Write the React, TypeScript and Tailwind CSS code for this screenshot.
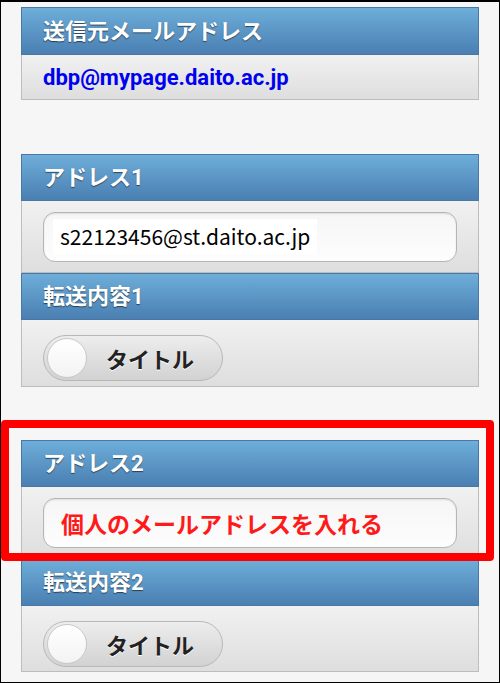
import React from "react";

const jp = { fontFamily: '"Noto Sans CJK JP", "Noto Sans", sans-serif' };
const rb = { fontFamily: 'Roboto, "Noto Sans CJK JP", sans-serif' };

function Header({ children, h = 47 }: { children: React.ReactNode; h?: number }) {
  return (
    <div
      className="flex items-center border border-[#4a78a6] bg-gradient-to-b from-[#6eaed9] to-[#4a7fb2] pl-[21px] text-[22px] font-bold text-white [text-shadow:0_1px_1px_rgba(0,0,0,0.55)]"
      style={{ ...rb, height: h }}
    >
      {children}
    </div>
  );
}

function Row({ children, className = "" }: { children: React.ReactNode; className?: string }) {
  return (
    <div className={"border-x border-b border-[#bdbdbd] bg-gradient-to-b from-[#f1f1f1] to-[#dedede] " + className}>
      {children}
    </div>
  );
}

function InputBox({ children }: { children: React.ReactNode }) {
  return (
    <div className="flex h-[50px] items-center rounded-[12px] border border-[#b5b5b5] bg-gradient-to-b from-[#f6f6f6] to-[#fdfdfd] pl-[9px] shadow-[inset_0_1px_2px_rgba(0,0,0,0.1)]">
      {children}
    </div>
  );
}

function Toggle() {
  return (
    <div className="flex h-[46px] w-[180px] items-center rounded-full border border-[#b8b8b8] bg-gradient-to-b from-[#ededed] to-[#d2d2d2] pl-[3px]">
      <div className="h-[40px] w-[40px] rounded-full border border-[#c8c8c8] bg-gradient-to-b from-white to-[#f3f3f3]" />
      <span
        className="ml-[19px] text-[22px] font-bold text-[#222] [text-shadow:0_1px_0_#fff]"
        style={jp}
      >
        タイトル
      </span>
    </div>
  );
}

export default function App() {
  return (
    <div className="relative h-[683px] w-[500px] overflow-hidden border-b border-l border-r border-t-2 border-black bg-[#f6f6f6]">
      <div className="flex flex-col px-[20px] pt-[5px]">
        {/* Panel 1 */}
        <div>
          <Header h={48}>送信元メールアドレス</Header>
          <Row className="flex h-[45px] items-center pl-[21px]">
            <span className="text-[22px] font-bold text-[#0000f0]" style={rb}>
              dbp@mypage.daito.ac.jp
            </span>
          </Row>
        </div>

        {/* Panel 2 */}
        <div className="mt-[54px]">
          <Header>アドレス1</Header>
          <Row className="px-[21px] pb-[10px] pt-[11px]">
            <InputBox>
              <span className="bg-white px-[7px] py-[2px] text-[21px] text-black" style={jp}>
                s22123456@st.daito.ac.jp
              </span>
            </InputBox>
          </Row>
          <Header>転送内容1</Header>
          <Row className="pb-[5px] pl-[21px] pt-[15px]">
            <Toggle />
          </Row>
        </div>

        {/* Panel 3 */}
        <div className="mt-[53px]">
          <Header>アドレス2</Header>
          <Row className="px-[21px] pb-[10px] pt-[11px]">
            <InputBox>
              <span className="px-[8px] text-[23px] font-bold text-[#ff1a1a]" style={jp}>
                個人のメールアドレスを入れる
              </span>
            </InputBox>
          </Row>
          <Header>転送内容2</Header>
          <Row className="pb-[4px] pl-[21px] pt-[15px]">
            <Toggle />
          </Row>
        </div>
      </div>

      {/* Annotation box */}
      <div className="pointer-events-none absolute left-[0px] top-[418px] h-[141px] w-[493px] rounded-[4px] border-[8px] border-[#ff0000]" />
    </div>
  );
}
